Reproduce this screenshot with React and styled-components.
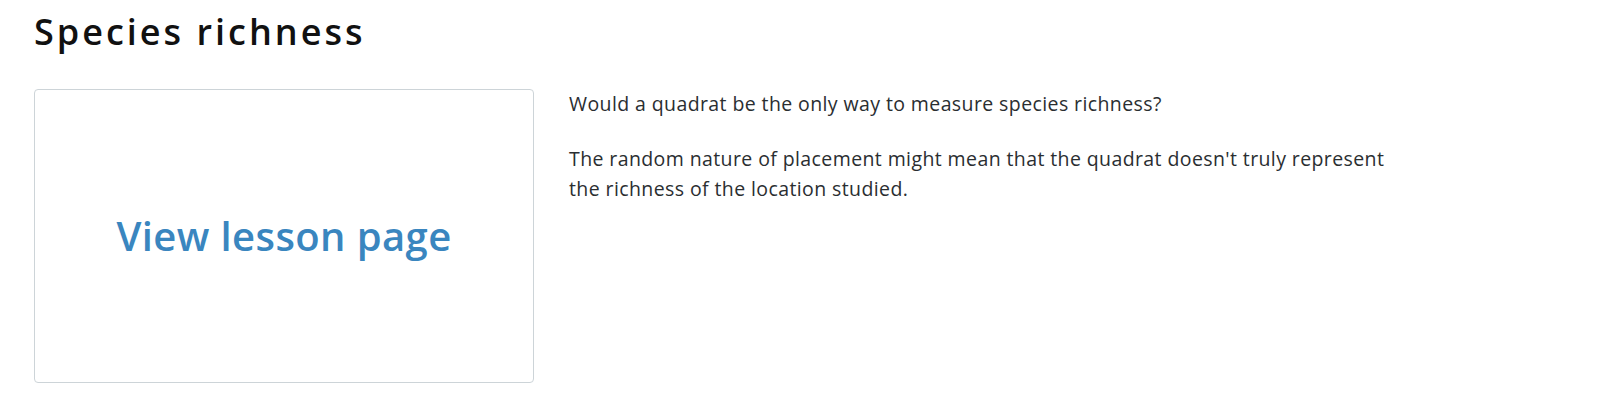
import React from 'react';
import styled, { createGlobalStyle } from 'styled-components';

const GlobalStyle = createGlobalStyle`
	body {
		margin: 0;
		background: #fff;
		font-family: 'Open Sans', 'Noto Sans', sans-serif;
	}
`;

const Page = styled.div`
	padding: 8px 34px 20px;
`;

const Title = styled.h2`
	margin: 0 0 33px;
	font-size: 36px;
	line-height: 48px;
	font-weight: 600;
	letter-spacing: 3px;
	color: #111;
`;

const Row = styled.div`
	display: flex;
	align-items: flex-start;
	gap: 35px;
`;

const LessonCard = styled.a`
	display: flex;
	align-items: center;
	justify-content: center;
	flex: 0 0 auto;
	box-sizing: border-box;
	width: 500px;
	height: 294px;
	border: 1px solid #cdd4d8;
	border-radius: 4px;
	text-decoration: none;
	font-size: 40px;
	font-weight: 600;
	letter-spacing: 0.4px;
	color: #3a86bf;
	padding-bottom: 2px;
`;

const Notes = styled.div`
	max-width: 830px;
`;

const Para = styled.p`
	margin: 0 0 ${({ last }) => (last ? 0 : '25px')};
	font-size: 19.5px;
	line-height: 30px;
	letter-spacing: 0.4px;
	color: #2a2e31;
`;

export default function App() {
	return (
		<Page>
			<GlobalStyle />
			<Title>Species richness</Title>
			<Row>
				<LessonCard href="#">View lesson page</LessonCard>
				<Notes>
					<Para>Would a quadrat be the only way to measure species richness?</Para>
					<Para last>
						The random nature of placement might mean that the quadrat doesn't truly represent the richness of the location studied.
					</Para>
				</Notes>
			</Row>
		</Page>
	);
}
